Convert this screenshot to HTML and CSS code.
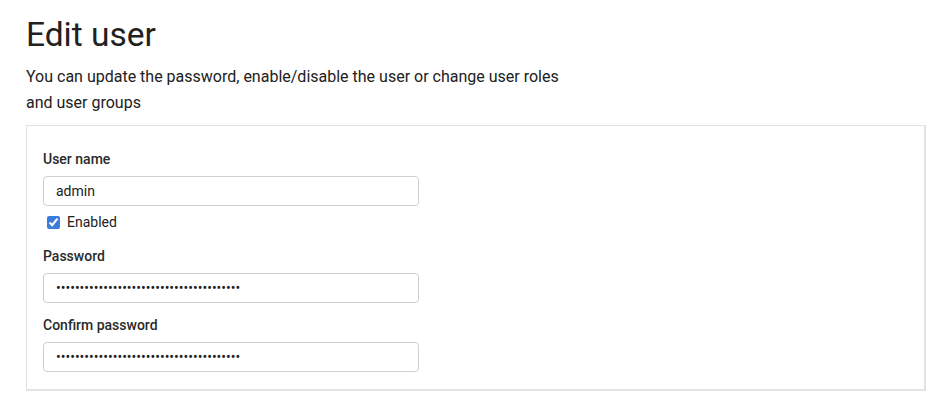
FILE: index.html
```html
<!DOCTYPE html>
<html lang="en">
<head>
  <meta charset="UTF-8" />
  <meta name="viewport" content="width=device-width, initial-scale=1.0"/>
  <title>Edit user</title>
  <link rel="stylesheet" href="styles.css">
</head>
<body>
  <div class="page">
    <h1>Edit user</h1>
    <p class="intro">You can update the password, enable/disable the user or change user roles and user groups</p>
    <form class="card">
      <label class="label" for="username">User name</label>
      <input class="field" id="username" type="text" value="admin">
      <label class="check">
        <input type="checkbox" checked>
        <span>Enabled</span>
      </label>
      <label class="label" for="password">Password</label>
      <input class="field" id="password" type="password" value="aaaaaaaaaaaaaaaaaaaaaaaaaaaaaaaaaaaaaaa">
      <label class="label" for="confirm">Confirm password</label>
      <input class="field" id="confirm" type="password" value="aaaaaaaaaaaaaaaaaaaaaaaaaaaaaaaaaaaaaaa">
    </form>
  </div>
</body>
</html>
```

FILE: styles.css
```css
body {
  margin: 0;
  padding: 0;
  background-color: #fff;
  font-family: Roboto, "Liberation Sans", sans-serif;
  color: #212121;
}
.page {
  padding: 14px 9px 0 26px;
}
h1 {
  font-size: 33.5px;
  font-weight: 400;
  line-height: 42px;
  margin: 0 0 8px 0;
}
.intro {
  font-size: 16px;
  line-height: 26px;
  max-width: 550px;
  margin: 0 0 9px 0;
}
.card {
  display: flex;
  flex-direction: column;
  align-items: flex-start;
  border: 1px solid #e2e2e2;
  border-right-width: 2px;
  border-bottom-width: 2px;
  padding: 23px 16px 17px 16px;
}
.label {
  font-size: 14px;
  font-weight: 500;
  line-height: 20px;
  margin-bottom: 7px;
  color: #2a2a2a;
}
.field {
  box-sizing: border-box;
  width: 376px;
  height: 30px;
  border: 1px solid #cfcfcf;
  border-radius: 4px;
  padding: 0 12px;
  font-family: Roboto, "Liberation Sans", sans-serif;
  font-size: 14px;
  color: #212121;
  margin: 0 0 12px 0;
}
.field:last-child {
  margin-bottom: 0;
}
.check {
  display: flex;
  align-items: center;
  gap: 7px;
  font-size: 14px;
  line-height: 20px;
  margin: -6px 0 14px 4px;
}
.check input {
  margin: 0;
  width: 13px;
  height: 13px;
  accent-color: #3b7ddd;
}
```
